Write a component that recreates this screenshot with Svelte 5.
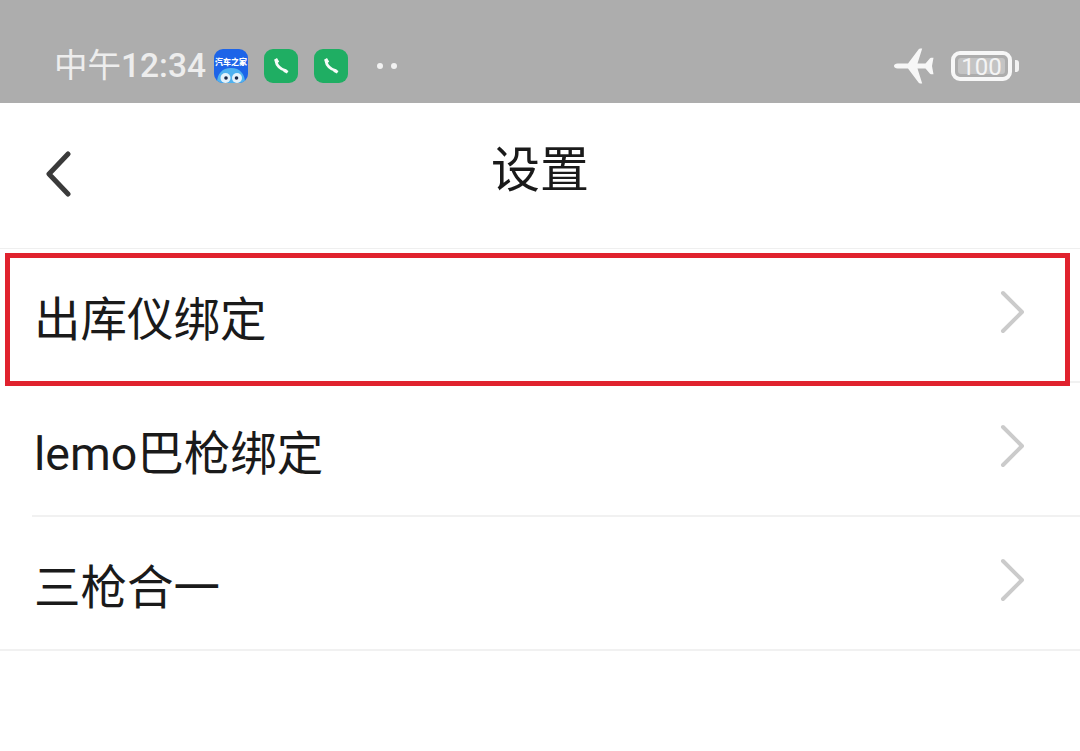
<script>
  const rows = [
    { label: '出库仪绑定' },
    { label: 'lemo巴枪绑定' },
    { label: '三枪合一' }
  ];
</script>

<div class="page">
  <header class="status">
    <div class="left">
      <span class="time"><span class="zh">中午</span>12:34</span>
      <div class="app auto">
        <span class="auto-text">汽车之家</span>
        <svg class="bird" viewBox="0 0 34 20" width="34" height="20" aria-hidden="true">
          <path d="M3 20c0-9 5-15 14-15s14 6 14 15z" fill="#4fb2f0" />
          <circle cx="11.500" cy="15" r="5" fill="#e4f2fb" />
          <circle cx="23" cy="15" r="5" fill="#e4f2fb" />
          <circle cx="12" cy="15" r="1.800" fill="#1b2a4a" />
          <circle cx="22.500" cy="15" r="1.800" fill="#1b2a4a" />
        </svg>
      </div>
      <div class="app phone">
        <svg viewBox="0 0 34 34" width="34" height="34" aria-hidden="true">
          <path d="M12 12C12.500 16.500 16.500 20.500 21.500 21.500" fill="none" stroke="#f6fbf8" stroke-width="2.800" stroke-linecap="round" />
          <path d="M10 10.800l3-1.800 2.200 3.800-2.700 1.600zM19.300 22.800l1.500-3 3.700 2.100-1.600 2.700z" fill="#f6fbf8" />
        </svg>
      </div>
      <div class="app phone">
        <svg viewBox="0 0 34 34" width="34" height="34" aria-hidden="true">
          <path d="M12 12C12.500 16.500 16.500 20.500 21.500 21.500" fill="none" stroke="#f6fbf8" stroke-width="2.800" stroke-linecap="round" />
          <path d="M10 10.800l3-1.800 2.200 3.800-2.700 1.600zM19.300 22.800l1.500-3 3.700 2.100-1.600 2.700z" fill="#f6fbf8" />
        </svg>
      </div>
      <div class="dots"><i></i><i></i></div>
    </div>
    <div class="right">
      <svg class="plane" viewBox="0 0 42 36" width="42" height="36" aria-hidden="true">
        <path d="M1 18c0-1.600 1.600-2.500 3.500-2.500H15L25.500 1.500c.6-.8 1.300-1 2.200-1h1.500L24.500 15.500h8L37 10.200c.3-.3.600-.5 1-.5h2.500L39 18l1.500 8.300H38c-.4 0-.7-.2-1-.5l-4.500-5.300h-8l4.700 15h-1.500c-.9 0-1.600-.2-2.200-1L15 20.500H4.500C2.600 20.500 1 19.600 1 18z" fill="#f7f7f7" />
      </svg>
      <div class="battery">
        <div class="shell">
          <div class="fill"></div>
          <span class="pct">100</span>
        </div>
        <div class="tip"></div>
      </div>
    </div>
  </header>

  <nav class="nav">
    <svg class="back" viewBox="0 0 30 46" width="30" height="46" aria-hidden="true">
      <path d="M24 3 L5 23 L24 43" fill="none" stroke="#3a3a3a" stroke-width="5" stroke-linecap="round" stroke-linejoin="round" />
    </svg>
    <h1>设置</h1>
  </nav>

  <ul class="list">
    {#each rows as row, i}
      <li class="row" class:last={i === rows.length - 1}>
        <span class="label">{row.label}</span>
        <svg class="chev" viewBox="0 0 28 44" width="28" height="44" aria-hidden="true">
          <path d="M5 3 L24 22 L5 41" fill="none" stroke="#cbcbcb" stroke-width="4" stroke-linecap="round" stroke-linejoin="round" />
        </svg>
      </li>
    {/each}
  </ul>

  <div class="highlight"></div>
</div>

<style>
  :global(body) {
    margin: 0;
    background: #fff;
  }

  .page {
    position: relative;
    width: 1080px;
    height: 751px;
    overflow: hidden;
    background: #fff;
    font-family: "Noto Sans CJK SC", "Noto Sans", sans-serif;
  }

  .status {
    box-sizing: border-box;
    height: 103px;
    background: #adadad;
    display: flex;
    align-items: center;
    justify-content: space-between;
    padding: 28px 61px 0 54px;
  }

  .left,
  .right {
    display: flex;
    align-items: center;
  }

  .time {
    width: 159px;
    flex: none;
    font-size: 33.500px;
    font-weight: 500;
    line-height: 40px;
    color: #ededed;
    font-family: Roboto, "Noto Sans CJK SC", sans-serif;
    white-space: nowrap;
  }

  .zh {
    font-weight: 400;
  }

  .app {
    width: 34px;
    height: 34px;
    flex: none;
    border-radius: 9px;
    overflow: hidden;
  }

  .auto {
    position: relative;
    background: #1d64e8;
    margin-left: 1px;
  }

  .auto-text {
    display: block;
    font-size: 8px;
    line-height: 10px;
    font-weight: 900;
    text-align: center;
    color: #fff;
    margin-top: 8px;
    white-space: nowrap;
  }

  .bird {
    position: absolute;
    left: 0;
    bottom: 0;
  }

  .phone {
    background: #1fae63;
    margin-left: 16px;
  }

  .phone svg,
  .bird,
  .plane,
  .back,
  .chev {
    display: block;
  }

  .dots {
    display: flex;
    gap: 8px;
    margin-left: 29px;
  }

  .dots i {
    width: 6px;
    height: 6px;
    border-radius: 50%;
    background: #f2f2f2;
  }

  .plane {
    margin-right: 16px;
  }

  .battery {
    display: flex;
    align-items: center;
    gap: 3px;
  }

  .shell {
    box-sizing: border-box;
    position: relative;
    width: 61px;
    height: 30px;
    border: 4px solid #f7f7f7;
    border-radius: 9px;
  }

  .fill {
    position: absolute;
    inset: 3px;
    border-radius: 3px;
    background: #c4c4c4;
  }

  .pct {
    position: absolute;
    inset: 0;
    text-align: center;
    font-family: Roboto, sans-serif;
    font-size: 24px;
    line-height: 24px;
    color: #f4f4f4;
  }

  .tip {
    width: 4px;
    height: 12px;
    border-radius: 0 3px 3px 0;
    background: #f2f2f2;
  }

  .nav {
    box-sizing: border-box;
    position: relative;
    height: 146px;
    border-bottom: 1px solid #efefef;
    display: flex;
    align-items: center;
    justify-content: center;
    padding-bottom: 20px;
  }

  .back {
    position: absolute;
    left: 44px;
    top: 48px;
  }

  h1 {
    margin: 0;
    font-size: 49px;
    line-height: 60px;
    font-weight: 400;
    color: #1a1a1a;
  }

  .list {
    list-style: none;
    margin: 0;
    padding: 0;
  }

  .row {
    box-sizing: border-box;
    height: 134px;
    margin-left: 32px;
    padding: 0 54px 0 2px;
    border-bottom: 2px solid #f1f1f1;
    display: flex;
    align-items: center;
    justify-content: space-between;
  }

  .row.last {
    margin-left: 0;
    padding-left: 34px;
  }

  .label {
    font-size: 46.500px;
    line-height: 60px;
    color: #1a1a1a;
    font-family: Roboto, "Noto Sans CJK SC", sans-serif;
    position: relative;
    top: 5px;
  }

  .chev {
    position: relative;
    top: -3px;
  }

  .highlight {
    box-sizing: border-box;
    position: absolute;
    left: 5px;
    top: 253px;
    width: 1065px;
    height: 133px;
    border: 5px solid #e0222e;
  }
</style>
